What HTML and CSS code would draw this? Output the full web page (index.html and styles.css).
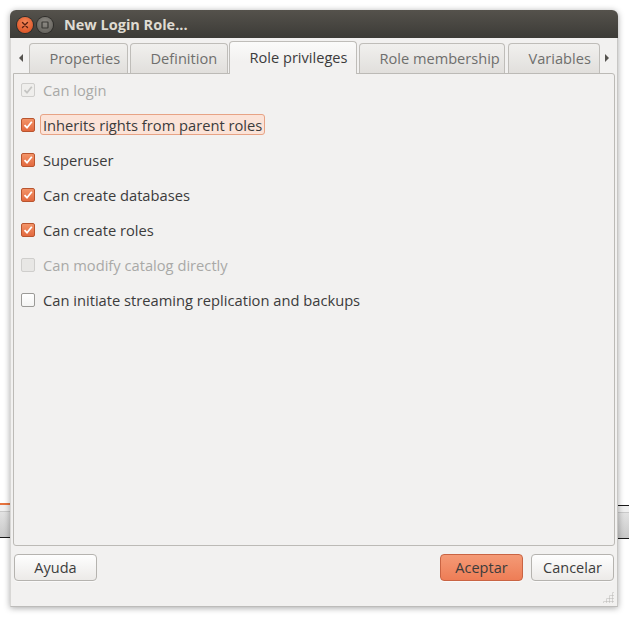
FILE: index.html
```html
<!DOCTYPE html>
<html>
<head>
<meta charset="utf-8">
<link rel="stylesheet" href="styles.css">
</head>
<body>
<div class="desk">
  <div class="desk-left"><div class="ln-orange"></div><div class="ln-light"></div><div class="band"></div><div class="ln-black"></div></div>
  <div class="desk-right"><div class="ln-black"></div><div class="ln-light"></div><div class="band"></div><div class="ln-black"></div></div>
</div>
<div class="window">
  <div class="titlebar">
    <span class="wbtn close"><svg width="16" height="16" viewBox="0 0 16 16"><path d="M5.5 5.5 L10.5 10.5 M10.5 5.5 L5.5 10.5" stroke="#5a2010" stroke-width="1.4" stroke-linecap="round"/></svg></span>
    <span class="wbtn max"><svg width="16" height="16" viewBox="0 0 16 16"><rect x="5" y="5" width="6" height="6" rx="0.5" fill="none" stroke="#3a3935" stroke-width="1.2"/></svg></span>
    <span class="title">New Login Role...</span>
  </div>
  <div class="wbody">
    <div class="tabbar">
      <span class="arrow left"><svg width="8" height="10" viewBox="0 0 8 10"><path d="M6 1 L2 5 L6 9 Z" fill="#55534f"/></svg></span>
      <div class="tabs">
        <div class="tab t1">Properties</div>
        <div class="tab t2">Definition</div>
        <div class="tab active t3">Role privileges</div>
        <div class="tab t4">Role membership</div>
        <div class="tab t5">Variables</div>
      </div>
      <span class="arrow right"><svg width="8" height="10" viewBox="0 0 8 10"><path d="M2 1 L6 5 L2 9 Z" fill="#55534f"/></svg></span>
    </div>
    <div class="panel">
      <div class="row disabled"><span class="cb checked"><svg width="12" height="12" viewBox="0 0 12 12"><path d="M2.5 6.2 L5 8.7 L9.8 2.8" fill="none" stroke="#c4c4c2" stroke-width="1.8"/></svg></span><span class="lbl">Can login</span></div>
      <div class="row"><span class="cb checked"><svg width="12" height="12" viewBox="0 0 12 12"><path d="M2.5 6.2 L5 8.7 L9.8 2.8" fill="none" stroke="#fff" stroke-width="1.8"/></svg></span><span class="lbl focus">Inherits rights from parent roles</span></div>
      <div class="row"><span class="cb checked"><svg width="12" height="12" viewBox="0 0 12 12"><path d="M2.5 6.2 L5 8.7 L9.8 2.8" fill="none" stroke="#fff" stroke-width="1.8"/></svg></span><span class="lbl">Superuser</span></div>
      <div class="row"><span class="cb checked"><svg width="12" height="12" viewBox="0 0 12 12"><path d="M2.5 6.2 L5 8.7 L9.8 2.8" fill="none" stroke="#fff" stroke-width="1.8"/></svg></span><span class="lbl">Can create databases</span></div>
      <div class="row"><span class="cb checked"><svg width="12" height="12" viewBox="0 0 12 12"><path d="M2.5 6.2 L5 8.7 L9.8 2.8" fill="none" stroke="#fff" stroke-width="1.8"/></svg></span><span class="lbl">Can create roles</span></div>
      <div class="row disabled"><span class="cb"></span><span class="lbl">Can modify catalog directly</span></div>
      <div class="row"><span class="cb"></span><span class="lbl">Can initiate streaming replication and backups</span></div>
    </div>
    <div class="buttons">
      <button class="btn">Ayuda</button>
      <div class="spacer"></div>
      <button class="btn primary">Aceptar</button>
      <button class="btn">Cancelar</button>
    </div>
    <div class="grip"></div>
  </div>
</div>
</body>
</html>
```

FILE: styles.css
```css
html, body {
  margin: 0;
  padding: 0;
  background: #ffffff;
}
body {
  width: 629px;
  height: 620px;
  overflow: hidden;
  position: relative;
  font-family: "Open Sans", "DejaVu Sans", sans-serif;
}
.desk {
  position: absolute;
  left: 0;
  top: 502px;
  width: 629px;
  height: 40px;
}
.desk-left, .desk-right {
  position: absolute;
  top: 0;
  width: 14px;
  display: flex;
  flex-direction: column;
}
.desk-left { left: 0; }
.desk-right { right: 0; }
.ln-orange { height: 2px; margin-top: 1px; background: #e8743e; }
.ln-black { height: 1px; background: #1a1a1a; }
.desk-right > .ln-black:first-child { margin-top: 3px; }
.ln-light { height: 6px; border-bottom: 1px solid #c9c9c9; background: #f0f0f0; }
.band { height: 25px; background: linear-gradient(#e2e2e2, #c9c9c9); }

.window {
  position: absolute;
  left: 10px;
  top: 10px;
  width: 608px;
  height: 597px;
  display: flex;
  flex-direction: column;
  border-radius: 6px 6px 0 0;
  box-shadow: 0 1px 6px rgba(0,0,0,0.35);
  background: #f2f1f0;
}
.titlebar {
  height: 28px;
  flex: none;
  display: flex;
  align-items: center;
  padding-left: 7px;
  background: linear-gradient(#55524c, #3c3b37);
  border-radius: 6px 6px 0 0;
}
.wbtn {
  width: 16px;
  height: 16px;
  border-radius: 50%;
  display: flex;
  margin-top: 1px;
}
.wbtn.close {
  background: radial-gradient(circle at 50% 35%, #f58a5b, #df5a2c 70%);
  box-shadow: 0 0 0 1px #2e2d2a;
}
.wbtn.max {
  margin-left: 4px;
  background: radial-gradient(circle at 50% 35%, #8d8a84, #6a6862 70%);
  box-shadow: 0 0 0 1px #2e2d2a;
}
.title {
  margin-left: 11px;
  color: #dfdbd2;
  font-weight: bold;
  font-size: 14.5px;
  margin-top: 1px;
}
.wbody {
  flex: 1;
  display: flex;
  flex-direction: column;
  padding: 3px 2px 0 2px;
  position: relative;
  border-left: 1px solid #d8d7d5;
  border-right: 1px solid #c8c7c5;
  border-bottom: 1px solid #bdbcba;
}
.tabbar {
  display: flex;
  height: 32px;
  flex: none;
  align-items: flex-end;
}
.arrow {
  width: 16px;
  height: 32px;
  display: flex;
  align-items: center;
  justify-content: center;
  padding-top: 1px;
  box-sizing: border-box;
}
.tabs {
  display: flex;
  gap: 2px;
  align-items: flex-end;
  height: 32px;
}
.tab {
  box-sizing: border-box;
  height: 30px;
  padding: 0 0 1px 20px;
  display: flex;
  align-items: center;
  font-size: 14.6px;
  color: #6f6f6d;
  border: 1px solid #bfbdb9;
  border-bottom: none;
  border-radius: 4px 4px 0 0;
  background: linear-gradient(#f1f0ee, #e1dfdc);
  position: relative;
  z-index: 0;
}
.tab.active {
  height: 33px;
  margin-bottom: -1px;
  color: #3c3c3c;
  background: linear-gradient(#fbfbfa, #f2f1f0 60%);
  z-index: 2;
  padding-bottom: 3px;
}
.t1 { width: 99px; }
.t2 { width: 98px; }
.t3 { width: 128px; margin-left: -1px; }
.t4 { width: 146px; }
.t5 { width: 92px; margin-left: 1px; }

.panel {
  flex: 1;
  border: 1px solid #bcbab6;
  border-radius: 0 3px 3px 3px;
  background: #f2f1f0;
  padding: 5px 7px;
  display: flex;
  flex-direction: column;
  gap: 14px;
  position: relative;
  z-index: 1;
}
.row {
  display: flex;
  align-items: center;
  height: 21px;
  font-size: 14.7px;
  color: #3c3c3c;
}
.row.disabled { color: #a9a9a7; }
.cb {
  box-sizing: border-box;
  width: 14px;
  height: 14px;
  border-radius: 2px;
  border: 1px solid #9b9a97;
  background: linear-gradient(#ffffff, #f4f4f3);
  display: flex;
  align-items: center;
  justify-content: center;
  flex: none;
}
.cb.checked {
  border-color: #b9552f;
  background: linear-gradient(#f39468, #e3693f);
}
.row.disabled .cb {
  border-color: #cfcecc;
  background: #e8e7e5;
}
.row.disabled .cb.checked { background: #efeeec; }
.lbl {
  margin-left: 5px;
  padding: 0 2px;
  height: 21px;
  line-height: 20px;
  box-sizing: border-box;
  border: 1px solid transparent;
  border-radius: 3px;
}
.lbl.focus {
  background: #fbe3d8;
  border-color: #e7a385;
}
.buttons {
  flex: none;
  display: flex;
  gap: 8px;
  padding: 8px 1px 0 1px;
  height: 60px;
  box-sizing: border-box;
}
.spacer { flex: 1; }
.btn {
  width: 83px;
  height: 27px;
  font-family: inherit;
  font-size: 14.5px;
  color: #3c3c3c;
  border: 1px solid #b5b3af;
  border-radius: 4px;
  background: linear-gradient(#fefefe, #eceae8);
  padding: 0;
  box-shadow: 0 1px 0 rgba(255,255,255,0.6);
}
.btn.primary {
  background: linear-gradient(#f49a76, #ee7d56);
  border-color: #c96443;
}
.grip {
  position: absolute;
  right: 3px;
  bottom: 3px;
  width: 12px;
  height: 12px;
  background-image: radial-gradient(circle, #c6c5c3 0.9px, transparent 1.2px);
  background-size: 3px 3px;
  clip-path: polygon(100% 0, 100% 100%, 0 100%);
}
```
